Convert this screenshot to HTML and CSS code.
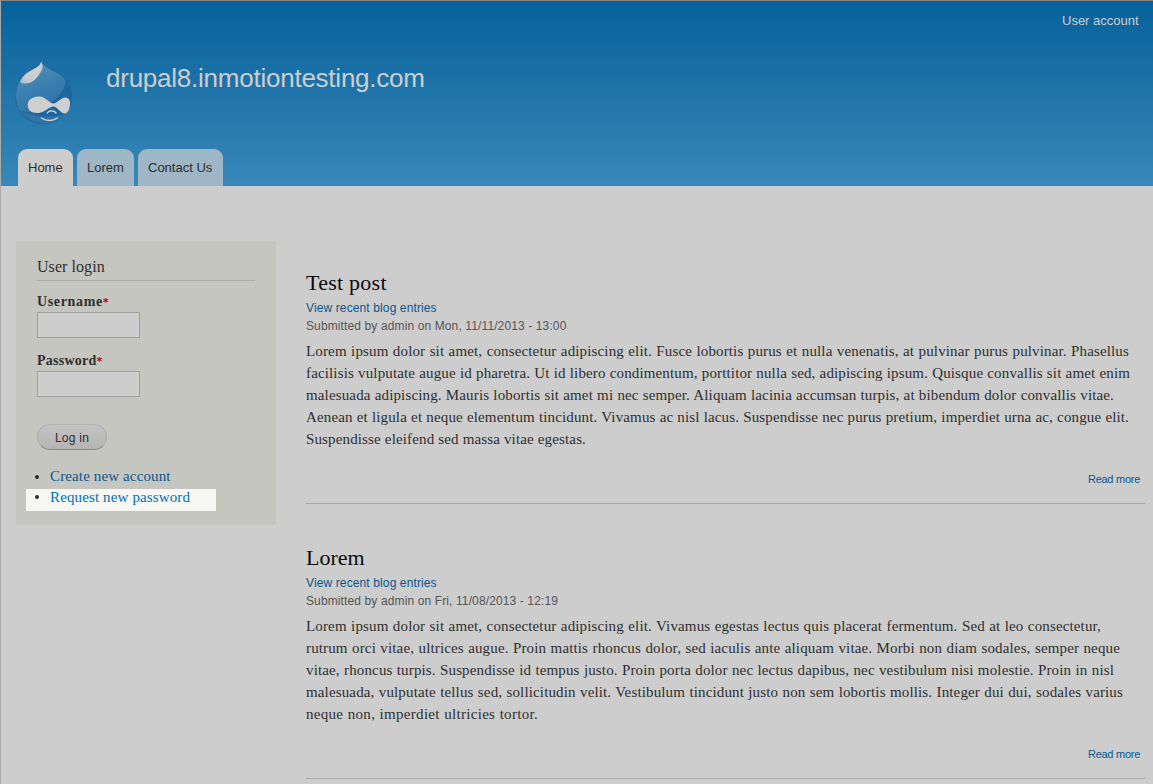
FILE: index.html
```html
<!DOCTYPE html>
<html lang="en">
<head>
<meta charset="utf-8">
<title>drupal8.inmotiontesting.com</title>
<link rel="stylesheet" href="styles.css">
</head>
<body>
<div class="page">
<header class="header">
  <nav class="account"><a class="account-link">User account</a></nav>
  <div class="brand">
    <svg class="logo" width="58" height="66" viewBox="0 0 58 66">
      <defs>
        <linearGradient id="drop" x1="0.2" y1="0" x2="0.6" y2="1"><stop offset="0" stop-color="#5a91b7"/><stop offset=".5" stop-color="#377eaf"/><stop offset="1" stop-color="#2a70a3"/></linearGradient>
        <linearGradient id="shine" x1="1" y1="0" x2="0" y2="1"><stop offset="0" stop-color="#c0c7cb"/><stop offset=".3" stop-color="#d0d0d0"/><stop offset=".75" stop-color="#c8cccf"/><stop offset="1" stop-color="#9dbacd"/></linearGradient>
      </defs>
      <path d="M26.300 .6C27.500 4.500 31 7 36 9.500C49 15.500 56.600 23.500 56.600 36.500C56.600 52 45 63.700 28.500 63.700C12 63.700 .6 52 .6 36.500C.6 26 5 17 13.500 11.500C20 7.500 25.500 6.500 26.300 .6Z" fill="url(#drop)" stroke="#2a668e" stroke-width=".9"/>
      <path d="M50.500 19C55 25 56.200 31 56.200 36.500C56.200 52 45 63.200 28.500 63.200C19 63.200 10 59 6 51C18 54 29 49 39 40C47 33 51 27 50.500 19Z" fill="#17609a" opacity=".7"/>
      <path d="M6 51C11 59 20 63.200 28.500 63.200C38 63.200 46 60 51 53C39 59 19 57 6 51Z" fill="#3e82b0" opacity=".55"/>
      <path d="M26.300 1.200C27 4 28.500 7 27 9.500C24.500 14 22.500 18 17.500 21.500C13.500 24 8 24 5.500 22.500C4.500 21.500 7 17 12 13C19 8.500 25 7 26.300 1.200Z" fill="url(#shine)"/>
      <path d="M24 36.500C30 36.500 35 43.500 38.500 43.500C42 43.500 46 37.500 50 37.500C53.500 37.500 55.500 40 55 44.500C54.500 50 52.500 53.500 50 53.500C45.500 53.500 42 46.500 38.500 46.500C34 46.500 29.500 53 22.500 53C15.500 53 12.700 49.500 12.700 45C12.700 40.500 17 36.500 24 36.500Z" fill="#cfcfcf"/>
      <path d="M32.300 53C34 50 39 50 41 53M26.500 58C31 61.300 38 61.300 42.300 58" fill="none" stroke="#d0d0d0" stroke-width="1.500" stroke-linecap="round"/>
    </svg>
    <div class="site-name">drupal8.inmotiontesting.com</div>
  </div>
  <nav class="tabs">
    <a class="tab tab-home">Home</a><a class="tab tab-lorem">Lorem</a><a class="tab tab-contact">Contact Us</a>
  </nav>
</header>
<div class="columns">
  <aside class="login">
    <h2 class="block-title">User login</h2>
    <label class="label label-user">Username<span class="required">*</span></label>
    <input class="field" type="text">
    <label class="label label-pass">Password<span class="required">*</span></label>
    <input class="field" type="password">
    <button class="button">Log in</button>
    <ul class="links">
      <li class="item"><a>Create new account</a></li>
      <li class="item highlighted"><a>Request new password</a></li>
    </ul>
  </aside>
  <main class="content">
    <article class="post">
      <h2 class="post-title test-title">Test post</h2>
      <a class="blog-link">View recent blog entries</a>
      <div class="meta">Submitted by admin on Mon, 11/11/2013 - 13:00</div>
      <div class="text">
        <div class="line" style="width:823px">Lorem ipsum dolor sit amet, consectetur adipiscing elit. Fusce lobortis purus et nulla venenatis, at pulvinar purus pulvinar. Phasellus</div>
        <div class="line" style="width:824px">facilisis vulputate augue id pharetra. Ut id libero condimentum, porttitor nulla sed, adipiscing ipsum. Quisque convallis sit amet enim</div>
        <div class="line" style="width:808px">malesuada adipiscing. Mauris lobortis sit amet mi nec semper. Aliquam lacinia accumsan turpis, at bibendum dolor convallis vitae.</div>
        <div class="line" style="width:823px">Aenean et ligula et neque elementum tincidunt. Vivamus ac nisl lacus. Suspendisse nec purus pretium, imperdiet urna ac, congue elit.</div>
        <div class="line" style="width:280px">Suspendisse eleifend sed massa vitae egestas.</div>
      </div>
      <a class="more">Read more</a>
    </article>
    <article class="post">
      <h2 class="post-title">Lorem</h2>
      <a class="blog-link">View recent blog entries</a>
      <div class="meta">Submitted by admin on Fri, 11/08/2013 - 12:19</div>
      <div class="text">
        <div class="line" style="width:795px">Lorem ipsum dolor sit amet, consectetur adipiscing elit. Vivamus egestas lectus quis placerat fermentum. Sed at leo consectetur,</div>
        <div class="line" style="width:814px">rutrum orci vitae, ultrices augue. Proin mattis rhoncus dolor, sed iaculis ante aliquam vitae. Morbi non diam sodales, semper neque</div>
        <div class="line" style="width:808px">vitae, rhoncus turpis. Suspendisse id tempus justo. Proin porta dolor nec lectus dapibus, nec vestibulum nisi molestie. Proin in nisl</div>
        <div class="line" style="width:817px">malesuada, vulputate tellus sed, sollicitudin velit. Vestibulum tincidunt justo non sem lobortis mollis. Integer dui dui, sodales varius</div>
        <div class="line line-loose" style="width:232px">neque non, imperdiet ultricies tortor.</div>
      </div>
      <a class="more">Read more</a>
    </article>
  </main>
</div>
</div>
</body>
</html>
```
FILE: styles.css
```css
* { box-sizing: border-box; }
body { margin: 0; background: #cdcdcd; color: #2f2f2f; font-family: "Liberation Sans", Arial, sans-serif; overflow: hidden; }
.page { height: 784px; overflow: hidden; border-top: 1px solid #858585; border-left: 1px solid #aaa; }
.header { height: 185px; padding: 10px 14px 0 15px; display: flex; flex-direction: column; background: linear-gradient(#06619a, #3988b9); }
.account { height: 18px; padding-top: 1px; display: flex; justify-content: flex-end; font-size: 13px; line-height: 18px; color: #cdcdcd; }
.account-link { width: 77px; white-space: nowrap; }
.brand { height: 120px; padding-top: 31px; display: flex; gap: 33px; }
.logo { flex: none; margin-left: -1px; }
.site-name { margin-top: 3px; font-size: 26px; line-height: 30px; color: #cdcdcd; white-space: nowrap; letter-spacing: -.24px; }
.tabs { display: flex; gap: 4px; margin-left: 2px; }
.tab { height: 37px; border-radius: 9px 9px 0 0; background: #9eb6c6; padding-left: 10px; font-size: 13px; line-height: 37px; white-space: nowrap; color: #2d2d2d; }
.tab-home { width: 55px; background: #cdcdcd; }
.tab-lorem { width: 57px; }
.tab-contact { width: 85px; }
.columns { display: flex; padding: 55px 8px 0 15px; gap: 30px; align-items: flex-start; }
.login { width: 260px; height: 284px; padding: 16px 21px 0; background: #c6c6c1; border-bottom: 1px solid #c8c8c4; display: flex; flex-direction: column; align-items: flex-start; font-family: "Liberation Serif", Georgia, serif; }
.block-title { margin: 0 0 12px; width: 218px; height: 24px; border-bottom: 1px solid #adadab; font-size: 16px; font-weight: 400; line-height: 20px; letter-spacing: .06px; }
.label { height: 19px; font-size: 14px; line-height: 18px; font-weight: 700; }
.label-user { letter-spacing: .65px; }
.label-pass { letter-spacing: .25px; }
.required { color: #c40000; font-size: 12px; letter-spacing: 0; }
.field { width: 103px; height: 26px; margin: 0 0 14px; border: 1px solid #9f9f9f; background: #cdcdcd; }
.button { width: 70px; height: 26px; margin-top: 13px; padding: 1px 0 0; border: 1px solid #aaa; border-top-color: #b2b2b2; border-bottom-color: #898989; border-radius: 13px; background: linear-gradient(#c4c4c4, #b4b4b4); font: 12px/20px "Liberation Sans", Arial, sans-serif; color: #2e2e2e; letter-spacing: .25px; }
.links { width: 190px; margin: 16px 0 0 -11px; padding: 0; font-size: 15px; line-height: 20px; letter-spacing: .13px; color: #0b568d; list-style: none; }
.item { height: 23px; padding-left: 24px; display: flex; align-items: flex-start; }
.item::before { content: ""; flex: none; width: 4px; height: 4px; border-radius: 50%; background: #2d2d2d; margin: 9px 11px 0 -15px; }
.highlighted { height: 22px; background: #f6f6f2; color: #0071b3; line-height: 16px; }
.highlighted::before { margin-top: 6px; }
.content { width: 839px; padding-top: 28px; }
.post { height: 235px; margin-bottom: 40px; border-bottom: 1px solid #a9a9a9; display: flex; flex-direction: column; align-items: flex-start; }
.post-title { margin: 0; height: 30px; font: 400 22px/28px "Liberation Serif", Georgia, serif; color: #0b0b0b; }
.test-title { letter-spacing: .25px; }
.blog-link, .meta { font-size: 12px; line-height: 18px; white-space: nowrap; letter-spacing: .12px; }
.blog-link { color: #0b568d; }
.meta { color: #555; }
.text { margin-top: 5px; font: 15px/22px "Liberation Serif", Georgia, serif; letter-spacing: .14px; }
.line { height: 22px; text-align: justify; text-align-last: justify; }
.line-loose { letter-spacing: .3px; }
.more { align-self: flex-end; margin: 21px 5px 0 0; font-size: 11px; line-height: 16px; letter-spacing: -.27px; color: #0b568d; }
```
